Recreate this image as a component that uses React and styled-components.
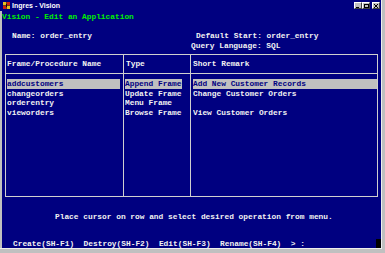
import styled, { createGlobalStyle } from 'styled-components'

const GlobalStyle = createGlobalStyle`
  html, body {
    margin: 0;
    padding: 0;
    background: #c0c0c0;
  }
`

const colors = {
  navy: '#000080',
  text: '#f2f2f2',
  green: '#00f000',
  line: '#cfcfcf',
  chrome: '#c0c0c0',
}

const Window = styled.div`
  width: 385px;
  height: 253px;
  box-sizing: border-box;
  display: flex;
  flex-direction: column;
  background: ${colors.chrome};
  padding: 0 3px 4px 0;
`

const Frame = styled.div`
  flex: 1;
  display: flex;
  flex-direction: column;
  border-right: 1px solid #eeeeee;
  border-bottom: 1px solid #eeeeee;
  min-height: 0;
`

const TitleBar = styled.div`
  height: 11px;
  background: ${colors.navy};
  display: flex;
  align-items: center;
  padding-left: 3px;
  gap: 2px;
`

const TitleText = styled.span`
  font-family: 'Liberation Sans', Arial, sans-serif;
  font-weight: bold;
  font-size: 7px;
  color: #ffffff;
  flex: 1;
  line-height: 11px;
`

const WinButtons = styled.div`
  display: flex;
  margin-right: 1px;
`

const WinButton = styled.div`
  width: 8px;
  height: 7px;
  box-sizing: border-box;
  background: ${colors.chrome};
  border-top: 1px solid #ffffff;
  border-left: 1px solid #ffffff;
  border-right: 1px solid #404040;
  border-bottom: 1px solid #404040;
  margin-left: ${({ $gap }) => ($gap ? '2px' : '0')};
  display: flex;
  align-items: center;
  justify-content: center;
`

const Screen = styled.div`
  flex: 1;
  background: ${colors.navy};
  border-left: 2px solid ${colors.chrome};
  color: ${colors.text};
  font-family: 'Liberation Mono', 'Courier New', monospace;
  font-weight: bold;
  font-size: 7.85px;
  line-height: 9.7px;
  white-space: pre;
  display: flex;
  flex-direction: column;
  padding-top: 1px;
`

const Heading = styled.div`
  color: ${colors.green};
  height: 9.7px;
`

const Info = styled.div`
  display: grid;
  grid-template-columns: 182px 1fr;
  margin-top: 9.3px;
`

const InfoLeft = styled.div`
  padding-left: 10px;
`

const InfoRight = styled.div`
  display: flex;
  flex-direction: column;
`

const InfoLine = styled.div`
  padding-left: ${({ $indent }) => $indent}px;
`

const Table = styled.div`
  margin: 4px 3px 0 3px;
  height: 141px;
  border: 1px solid ${colors.line};
  display: flex;
`

const Column = styled.div`
  width: ${({ $width }) => ($width ? `${$width}px` : 'auto')};
  flex: ${({ $width }) => ($width ? 'none' : '1')};
  border-left: ${({ $first }) => ($first ? 'none' : `1px solid ${colors.line}`)};
  display: flex;
  flex-direction: column;
`

const ColumnHead = styled.div`
  height: 17.5px;
  line-height: 18px;
  border-bottom: 1px solid ${colors.line};
  padding-left: ${({ $pad }) => $pad}px;
`

const ColumnBody = styled.div`
  padding: 5px 0 0 ${({ $pad }) => $pad}px;
  display: flex;
  flex-direction: column;
`

const Cell = styled.div`
  height: 9.7px;
  width: ${({ $chars }) => $chars * 4.71}px;
  background: ${({ $selected }) => ($selected ? colors.chrome : 'transparent')};
  color: ${({ $selected }) => ($selected ? colors.navy : colors.text)};
  overflow: hidden;
`

const Prompt = styled.div`
  margin-top: 15px;
  padding-left: 53px;
`

const Menu = styled.div`
  margin-top: auto;
  height: 9.5px;
  display: flex;
  align-items: flex-start;
  padding-left: 11px;
`

const MenuText = styled.span`
  flex: 1;
`

const CursorBlock = styled.span`
  width: 4.5px;
  height: 9px;
  margin-top: 0.5px;
  margin-right: 0.5px;
  background: #000000;
`

const rows = [
  { name: 'addcustomers', type: 'Append Frame', remark: 'Add New Customer Records' },
  { name: 'changeorders', type: 'Update Frame', remark: 'Change Customer Orders' },
  { name: 'orderentry', type: 'Menu Frame', remark: '' },
  { name: 'vieworders', type: 'Browse Frame', remark: 'View Customer Orders' },
]

function AppIcon() {
  return (
    <svg width="7" height="7" viewBox="0 0 7 7">
      <rect x="0" y="0" width="7" height="7" fill="#7a3a10" />
      <rect x="0" y="0" width="3" height="3" fill="#e8c020" />
      <rect x="4" y="0" width="3" height="3" fill="#d02010" />
      <rect x="0" y="4" width="3" height="3" fill="#d02010" />
      <rect x="4" y="4" width="3" height="3" fill="#e8c020" />
      <rect x="3" y="2" width="1" height="3" fill="#101010" />
    </svg>
  )
}

function App() {
  return (
    <>
      <GlobalStyle />
      <Window>
        <Frame>
          <TitleBar>
            <AppIcon />
            <TitleText>Ingres - Vision</TitleText>
            <WinButtons>
              <WinButton>
                <svg width="4" height="4" viewBox="0 0 4 4">
                  <rect x="0" y="3" width="3" height="1" fill="#000" />
                </svg>
              </WinButton>
              <WinButton>
                <svg width="5" height="4" viewBox="0 0 5 4">
                  <rect x="0.5" y="0.5" width="4" height="3" fill="none" stroke="#000" strokeWidth="1" />
                </svg>
              </WinButton>
              <WinButton $gap>
                <svg width="4" height="4" viewBox="0 0 4 4">
                  <path d="M0 0 L4 4 M4 0 L0 4" stroke="#000" strokeWidth="1" />
                </svg>
              </WinButton>
            </WinButtons>
          </TitleBar>
          <Screen>
            <Heading>Vision - Edit an Application</Heading>
            <Info>
              <InfoLeft>Name: order_entry</InfoLeft>
              <InfoRight>
                <InfoLine $indent={12}>Default Start: order_entry</InfoLine>
                <InfoLine $indent={7}>Query Language: SQL</InfoLine>
              </InfoRight>
            </Info>
            <Table>
              <Column $first $width={117}>
                <ColumnHead $pad={1}>Frame/Procedure Name</ColumnHead>
                <ColumnBody $pad={1}>
                  {rows.map((r, i) => (
                    <Cell key={r.name} $chars={24} $selected={i === 0}>{r.name}</Cell>
                  ))}
                </ColumnBody>
              </Column>
              <Column $width={66}>
                <ColumnHead $pad={2}>Type</ColumnHead>
                <ColumnBody $pad={1}>
                  {rows.map((r, i) => (
                    <Cell key={r.name} $chars={12} $selected={i === 0}>{r.type}</Cell>
                  ))}
                </ColumnBody>
              </Column>
              <Column>
                <ColumnHead $pad={2}>Short Remark</ColumnHead>
                <ColumnBody $pad={2}>
                  {rows.map((r, i) => (
                    <Cell key={r.name} $chars={39} $selected={i === 0}>{r.remark}</Cell>
                  ))}
                </ColumnBody>
              </Column>
            </Table>
            <Prompt>Place cursor on row and select desired operation from menu.</Prompt>
            <Menu>
              <MenuText>Create(SH-F1)  Destroy(SH-F2)  Edit(SH-F3)  Rename(SH-F4)  &gt; :</MenuText>
              <CursorBlock />
            </Menu>
          </Screen>
        </Frame>
      </Window>
    </>
  )
}

export default App
